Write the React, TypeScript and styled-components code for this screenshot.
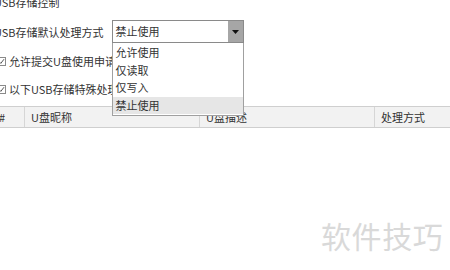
import React from 'react';
import styled, { createGlobalStyle } from 'styled-components';

const GlobalStyle = createGlobalStyle`
  body {
    margin: 0;
    background: #ffffff;
    overflow: hidden;
    font-family: "Noto Sans CJK SC", "Noto Sans", sans-serif;
    font-size: 11px;
    color: #333333;
  }
`;

const Page = styled.div`
  position: relative;
  width: 460px;
  height: 280px;
  margin-left: -6px;
  margin-top: -5px;
`;

const Title = styled.div`
  height: 14px;
  line-height: 14px;
`;

const FieldRow = styled.div`
  display: flex;
  align-items: center;
  gap: 8px;
  margin-top: 11px;
  height: 23px;
`;

const Label = styled.span`
  line-height: 14px;
  white-space: nowrap;
`;

const SelectWrap = styled.div`
  position: relative;
  width: 132px;
  height: 23px;
`;

const SelectBox = styled.div`
  display: flex;
  height: 100%;
  box-sizing: border-box;
  border: 1px solid #8a8a8a;
  background: #fff;
`;

const SelectValue = styled.div`
  flex: 1;
  padding-left: 3px;
  line-height: 21px;
`;

const ArrowButton = styled.div`
  width: 15px;
  background: #a6a6a6;
  display: flex;
  align-items: center;
  justify-content: center;
`;

const Options = styled.ul`
  position: absolute;
  top: 23px;
  left: 0;
  width: 132px;
  box-sizing: border-box;
  margin: 0;
  padding: 1px 0 1px;
  list-style: none;
  background: #fff;
  border: 1px solid #a0a0a0;
  border-top: none;
  z-index: 2;
`;

const Option = styled.li<{ $active?: boolean }>`
  height: 17.5px;
  line-height: 17.5px;
  padding-left: 3px;
  background: ${(p) => (p.$active ? '#e6e6e6' : 'transparent')};
`;

const CheckRow = styled.label`
  display: flex;
  align-items: center;
  gap: 3px;
  height: 28px;
  padding-left: 3px;
  white-space: nowrap;
`;

const FirstCheck = styled(CheckRow)`
  margin-top: 4px;
`;

const CheckBox = styled.span`
  width: 9px;
  height: 9px;
  box-sizing: border-box;
  border: 1px solid #8a8a8a;
  background: #fff;
  display: flex;
  align-items: center;
  justify-content: center;
`;

const TableHead = styled.div`
  display: grid;
  grid-template-columns: 30px 175px 175px 1fr;
  height: 22px;
  margin-top: 3px;
  box-sizing: border-box;
  border-top: 1px solid #cfcfcf;
  border-bottom: 1px solid #cfcfcf;
  background: #f2f2f2;
`;

const HeadCell = styled.div<{ $first?: boolean }>`
  line-height: 20px;
  padding-left: ${(p) => (p.$first ? '5px' : '6px')};
  border-left: ${(p) => (p.$first ? 'none' : '1px solid #d6d6d6')};
  white-space: nowrap;
`;

const Watermark = styled.div`
  position: absolute;
  left: 327px;
  top: 223px;
  font-size: 30px;
  line-height: 34px;
  color: #d9d9d9;
  letter-spacing: 0.6px;
`;

const Check = () => (
  <svg width="7" height="7" viewBox="0 0 7 7">
    <path d="M1 3.6 L2.8 5.4 L6 1.2" fill="none" stroke="#555" strokeWidth="1" />
  </svg>
);

export default function App() {
  return (
    <>
      <GlobalStyle />
      <Page>
        <Title>USB存储控制</Title>
        <FieldRow>
          <Label>USB存储默认处理方式</Label>
          <SelectWrap>
            <SelectBox>
              <SelectValue>禁止使用</SelectValue>
              <ArrowButton>
                <svg width="7" height="4" viewBox="0 0 7 4">
                  <path d="M0 0 H7 L3.5 4 Z" fill="#111" />
                </svg>
              </ArrowButton>
            </SelectBox>
            <Options>
              <Option>允许使用</Option>
              <Option>仅读取</Option>
              <Option>仅写入</Option>
              <Option $active>禁止使用</Option>
            </Options>
          </SelectWrap>
        </FieldRow>
        <FirstCheck>
          <CheckBox><Check /></CheckBox>
          允许提交U盘使用申请
        </FirstCheck>
        <CheckRow>
          <CheckBox><Check /></CheckBox>
          以下USB存储特殊处理
        </CheckRow>
        <TableHead>
          <HeadCell $first>#</HeadCell>
          <HeadCell>U盘昵称</HeadCell>
          <HeadCell>U盘描述</HeadCell>
          <HeadCell>处理方式</HeadCell>
        </TableHead>
        <Watermark>软件技巧</Watermark>
      </Page>
    </>
  );
}
